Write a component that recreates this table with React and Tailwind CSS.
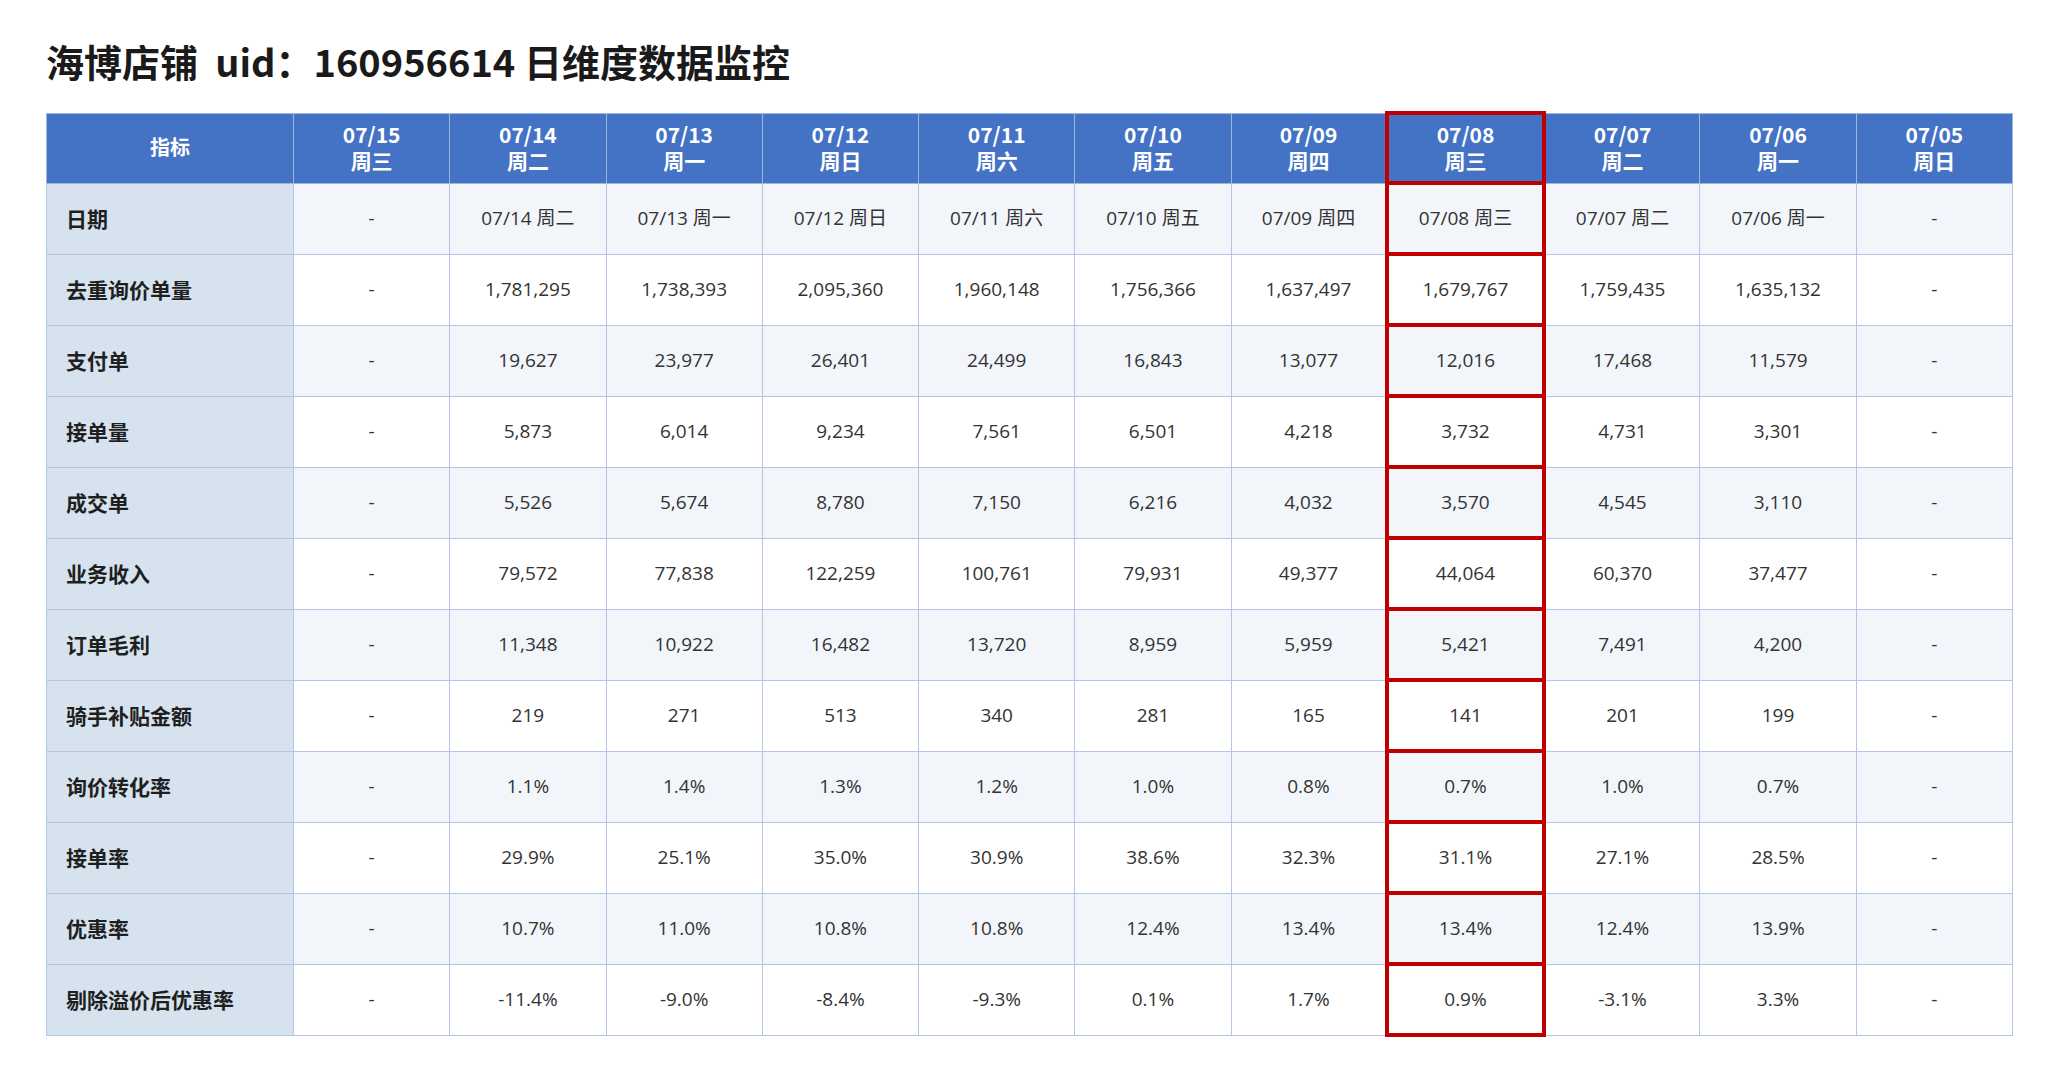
import React from "react";

const cols = [
  ["07/15", "周三"],
  ["07/14", "周二"],
  ["07/13", "周一"],
  ["07/12", "周日"],
  ["07/11", "周六"],
  ["07/10", "周五"],
  ["07/09", "周四"],
  ["07/08", "周三"],
  ["07/07", "周二"],
  ["07/06", "周一"],
  ["07/05", "周日"],
];

const rows = [
  ["日期", ["-", "07/14 周二", "07/13 周一", "07/12 周日", "07/11 周六", "07/10 周五", "07/09 周四", "07/08 周三", "07/07 周二", "07/06 周一", "-"]],
  ["去重询价单量", ["-", "1,781,295", "1,738,393", "2,095,360", "1,960,148", "1,756,366", "1,637,497", "1,679,767", "1,759,435", "1,635,132", "-"]],
  ["支付单", ["-", "19,627", "23,977", "26,401", "24,499", "16,843", "13,077", "12,016", "17,468", "11,579", "-"]],
  ["接单量", ["-", "5,873", "6,014", "9,234", "7,561", "6,501", "4,218", "3,732", "4,731", "3,301", "-"]],
  ["成交单", ["-", "5,526", "5,674", "8,780", "7,150", "6,216", "4,032", "3,570", "4,545", "3,110", "-"]],
  ["业务收入", ["-", "79,572", "77,838", "122,259", "100,761", "79,931", "49,377", "44,064", "60,370", "37,477", "-"]],
  ["订单毛利", ["-", "11,348", "10,922", "16,482", "13,720", "8,959", "5,959", "5,421", "7,491", "4,200", "-"]],
  ["骑手补贴金额", ["-", "219", "271", "513", "340", "281", "165", "141", "201", "199", "-"]],
  ["询价转化率", ["-", "1.1%", "1.4%", "1.3%", "1.2%", "1.0%", "0.8%", "0.7%", "1.0%", "0.7%", "-"]],
  ["接单率", ["-", "29.9%", "25.1%", "35.0%", "30.9%", "38.6%", "32.3%", "31.1%", "27.1%", "28.5%", "-"]],
  ["优惠率", ["-", "10.7%", "11.0%", "10.8%", "10.8%", "12.4%", "13.4%", "13.4%", "12.4%", "13.9%", "-"]],
  ["剔除溢价后优惠率", ["-", "-11.4%", "-9.0%", "-8.4%", "-9.3%", "0.1%", "1.7%", "0.9%", "-3.1%", "3.3%", "-"]],
];

const HL = 7;

export default function App() {
  return (
    <div
      className="min-h-[1080px] w-[2056px] bg-white pl-[46px] pt-[38px]"
      style={{ fontFamily: '"Open Sans", "Noto Sans CJK SC", sans-serif' }}
    >
      <h1
        className="text-[38px] leading-[46px] font-bold text-[#1a1a1a]"
        style={{ fontFamily: '"Noto Sans CJK SC", sans-serif' }}
      >
        海博店铺&nbsp;&nbsp;uid：160956614 日维度数据监控
      </h1>
      <table className="mt-[27px] w-[1967px] table-fixed border-collapse">
        <colgroup>
          <col className="w-[247px]" />
          {cols.map((c, i) => (
            <col key={i} />
          ))}
        </colgroup>
        <thead>
          <tr className="h-[70px] bg-[#4472C4]">
            <th
              className="border border-[#9DB6E0] pb-[2px] text-center text-[20px] font-bold text-white"
              style={{ fontFamily: '"Noto Sans CJK SC", sans-serif' }}
            >
              指标
            </th>
            {cols.map(([d, w], i) => (
              <th
                key={i}
                className={
                  i === HL
                    ? "border-[4px] border-[#C00000] pb-[3px] text-center text-[21px] font-bold leading-[26px] text-white"
                    : "border border-[#9DB6E0] pb-[3px] text-center text-[21px] font-bold leading-[26px] text-white"
                }
                style={{ fontFamily: '"Noto Sans CJK SC", sans-serif' }}
              >
                <div>{d}</div>
                <div>{w}</div>
              </th>
            ))}
          </tr>
        </thead>
        <tbody>
          {rows.map(([label, vals], r) => (
            <tr
              key={r}
              className={r % 2 === 0 ? "h-[71px] bg-[#F2F6FB]" : "h-[71px] bg-white"}
            >
              <td
                className="border border-[#B4C6E7] bg-[#D6E3EF] pl-[19px] text-left text-[21px] font-bold text-[#1f1f1f]"
                style={{ fontFamily: '"Noto Sans CJK SC", sans-serif' }}
              >
                {label}
              </td>
              {vals.map((v, i) => (
                <td
                  key={i}
                  className={
                    i === HL
                      ? "border-[4px] border-[#C00000] text-center text-[19px] text-[#333333]"
                      : "border border-[#B4C6E7] text-center text-[19px] text-[#333333]"
                  }
                >
                  {v}
                </td>
              ))}
            </tr>
          ))}
        </tbody>
      </table>
    </div>
  );
}
